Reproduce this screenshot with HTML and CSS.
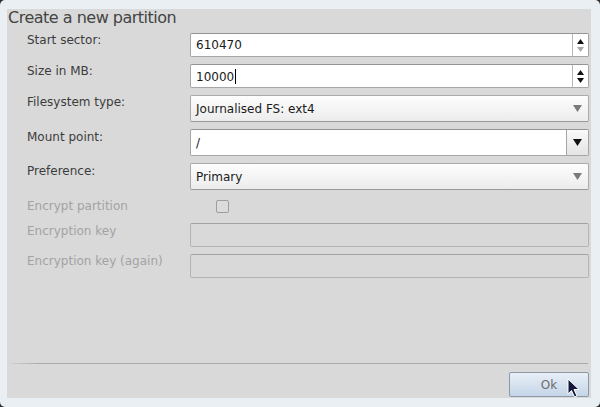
FILE: index.html
```html
<!DOCTYPE html>
<html lang="en">
<head>
    <meta charset="UTF-8">
    <title>Create a new partition</title>
    <link rel="stylesheet" href="styles.css">
</head>
<body>
    <div class="frame">
        <div class="dialog">
            <h1 class="title">Create a new partition</h1>

            <div class="form">
                <label class="lbl">Start sector:</label>
                <div class="field spin">
                    <span class="val">610470</span>
                    <div class="spin-btns">
                        <svg width="7" height="5" viewBox="0 0 7 5"><path d="M3.5 0 L7 5 L0 5 Z" fill="#111"/></svg>
                        <svg width="7" height="5" viewBox="0 0 7 5"><path d="M0 0 L7 0 L3.5 5 Z" fill="#a8a8a8"/></svg>
                    </div>
                </div>

                <label class="lbl">Size in MB:</label>
                <div class="field spin">
                    <span class="val">10000<span class="caret"></span></span>
                    <div class="spin-btns">
                        <svg width="7" height="5" viewBox="0 0 7 5"><path d="M3.5 0 L7 5 L0 5 Z" fill="#111"/></svg>
                        <svg width="7" height="5" viewBox="0 0 7 5"><path d="M0 0 L7 0 L3.5 5 Z" fill="#111"/></svg>
                    </div>
                </div>

                <label class="lbl">Filesystem type:</label>
                <div class="field combo">
                    <span class="val">Journalised FS: ext4</span>
                    <svg class="arrow" width="9" height="7" viewBox="0 0 9 7"><path d="M0 0 L9 0 L4.5 7 Z" fill="#7a7a7a"/></svg>
                </div>

                <label class="lbl low">Mount point:</label>
                <div class="field entry-combo">
                    <span class="val">/</span>
                    <div class="drop-btn">
                        <svg width="9" height="7" viewBox="0 0 9 7"><path d="M0 0 L9 0 L4.5 7 Z" fill="#111"/></svg>
                    </div>
                </div>

                <label class="lbl low">Preference:</label>
                <div class="field combo">
                    <span class="val">Primary</span>
                    <svg class="arrow" width="9" height="7" viewBox="0 0 9 7"><path d="M0 0 L9 0 L4.5 7 Z" fill="#7a7a7a"/></svg>
                </div>

                <label class="lbl disabled lower">Encrypt partition</label>
                <div class="check-row">
                    <span class="checkbox"></span>
                </div>

                <label class="lbl disabled low">Encryption key</label>
                <div class="field off"></div>

                <label class="lbl disabled">Encryption key (again)</label>
                <div class="field off"></div>
            </div>

            <div class="spacer"></div>
            <div class="sep"></div>

            <div class="footer">
                <button class="ok" type="button">Ok</button>
                <svg class="pointer" width="13" height="20" viewBox="0 0 13 20">
                    <path d="M1 1 L1 16 L4.5 12.5 L7.5 19 L10 18 L7 11.5 L12 11.5 Z" fill="#15183a" stroke="#fff" stroke-width="1"/>
                </svg>
            </div>
        </div>
    </div>
</body>
</html>
```

FILE: styles.css
```css
body {
    margin: 0;
    background: #2a2a2a;
    font-family: "DejaVu Sans", sans-serif;
    font-size: 12px;
}
.frame {
    height: 407px;
    box-sizing: border-box;
    padding: 9px 9px 9px 7px;
    background: #eaeff4;
    border-radius: 5px;
}
.dialog {
    height: 100%;
    background: #d9d9d9;
    display: flex;
    flex-direction: column;
}
.title {
    margin: 0;
    padding-left: 1px;
    font-size: 16px;
    letter-spacing: -0.5px;
    font-weight: normal;
    line-height: 18px;
    color: #444;
}
.form {
    margin-top: 6px;
    padding: 0 2px 0 20px;
    display: grid;
    grid-template-columns: 163px 1fr;
    row-gap: 7px;
    align-items: start;
}
.lbl {
    line-height: 13px;
    padding-top: 1px;
    color: #3c3c3c;
}
.lbl.low {
    padding-top: 2px;
}
.lbl.lower {
    padding-top: 3px;
}
.lbl.disabled {
    color: #a3a3a3;
}
.field {
    box-sizing: border-box;
    height: 24px;
    border: 1px solid #a6a6a6;
    border-top-color: #949494;
    border-radius: 2px;
    background: #fff;
    display: flex;
    align-items: center;
    color: #1a1a1a;
}
.val {
    flex: 1;
    padding-left: 5px;
    white-space: nowrap;
}
.caret {
    display: inline-block;
    width: 1px;
    height: 15px;
    background: #000;
    vertical-align: -3px;
    margin-left: 1px;
}
.spin-btns {
    align-self: stretch;
    width: 15px;
    border-left: 1px solid #b8b8b8;
    display: flex;
    flex-direction: column;
    align-items: center;
    justify-content: center;
    gap: 3px;
}
.spin-btns svg {
    display: block;
}
.combo {
    height: 27px;
    border-color: #ababab;
    border-bottom-color: #999;
    background: linear-gradient(#fdfdfd, #ececec);
}
.combo .arrow {
    margin-right: 6px;
}
.entry-combo {
    height: 27px;
}
.drop-btn {
    align-self: stretch;
    width: 21px;
    border-left: 1px solid #a6a6a6;
    background: linear-gradient(#fafafa, #e4e4e4);
    display: flex;
    align-items: center;
    justify-content: center;
}
.drop-btn svg {
    display: block;
}
.check-row {
    height: 19px;
    display: flex;
    align-items: center;
}
.checkbox {
    box-sizing: border-box;
    width: 13px;
    height: 13px;
    margin-left: 26px;
    border: 1px solid #9e9e9e;
    border-radius: 2px;
    background: #dcdcdc;
}
.field.off {
    background: #d9d9d9;
    border-color: #b4b4b4;
    border-top-color: #a2a2a2;
}
.spacer {
    flex: 1;
}
.sep {
    height: 1px;
    margin: 0 3px 0 3px;
    background: linear-gradient(to right, #d0d0d0, #a9a9a9 30px, #a9a9a9);
}
.footer {
    position: relative;
    display: flex;
    justify-content: flex-end;
    padding: 8px 2px 1px 0;
}
.ok {
    width: 80px;
    height: 25px;
    border: 1px solid #8c98a8;
    border-radius: 2px;
    background: linear-gradient(#e8eff7, #c4d5e8);
    font-family: "DejaVu Sans", sans-serif;
    font-size: 12px;
    color: #6c6c6c;
    padding: 0;
}
.pointer {
    position: absolute;
    left: 560px;
    top: 14px;
}
```
